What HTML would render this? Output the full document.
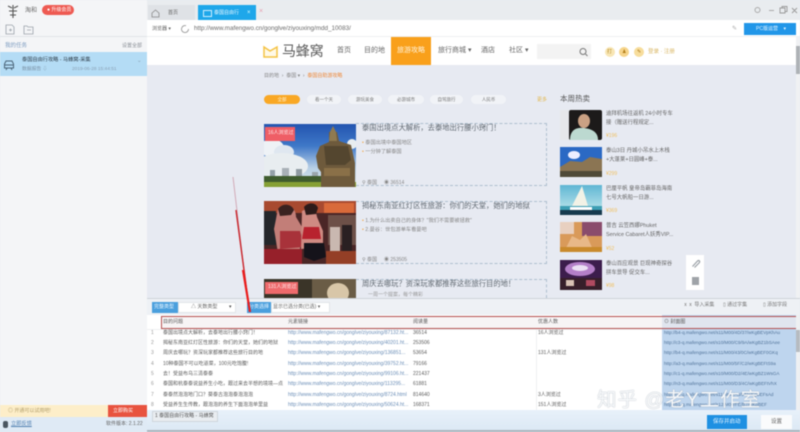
<!DOCTYPE html>
<html lang="zh">
<head>
<meta charset="utf-8">
<style>
html,body{margin:0;padding:0;width:800px;height:432px;overflow:hidden;background:#e7eaf2}
#r{position:relative;width:800px;height:432px;overflow:hidden;background:#e7eaf2;filter:blur(.6px);font-family:"Liberation Sans","Noto Sans CJK SC",sans-serif;color:#555}
.a{position:absolute}
.t{position:absolute;white-space:nowrap;font-size:5.5px;line-height:8px;color:#666}
.pill{position:absolute;top:95px;height:9px;border-radius:5px;background:#f1f3f7;font-size:4.5px;line-height:9px;text-align:center;color:#777}
.c{position:absolute;white-space:nowrap;font-size:5px;line-height:8px;color:#5c5c5c}
.u{color:#6c8fb8}
.i{color:#4f7299;font-size:4.6px}
</style>
</head>
<body>
<div id="r">
<!-- sidebar -->
<div class="a" style="left:0;top:0;width:147px;height:432px;background:#f4f5f7"></div>
<svg class="a" style="left:6px;top:3px" width="14" height="16" viewBox="0 0 14 16"><path d="M2 3l4 2M12 3L8 5M7 2v13M3 8h8M4 12h6" stroke="#555" stroke-width="1.1" fill="none"/></svg>
<div class="t" style="left:25px;top:7px;font-size:6px">淘和</div>
<div class="a" style="left:42px;top:5px;width:32px;height:10px;border-radius:5px;background:#ee5a52"></div>
<div class="t" style="left:47px;top:6px;font-size:5px;color:#fff">● 升级会员</div>
<svg class="a" style="left:4px;top:24px" width="32" height="11" viewBox="0 0 32 11"><path d="M2 1h6l2 2v7H2zM5 6h3M6.5 4.500v3M20 2h3l1 1h5v7h-9zM23 6h4" stroke="#9aa3ab" stroke-width=".8" fill="none"/></svg>
<div class="a" style="left:0;top:36px;width:147px;height:1px;background:#e2e4e7"></div>
<div class="t" style="left:5px;top:42px;color:#7d9cc0">我的任务</div>
<div class="t" style="left:122px;top:42px;color:#8a8f96;font-size:5px">设置全部</div>
<div class="a" style="left:0;top:52px;width:147px;height:24px;background:#b4dcf5"></div>
<svg class="a" style="left:3px;top:59px" width="12" height="12" viewBox="0 0 12 12"><path d="M3 2h6l1.500 3v4h-9V5zM1.500 6h9M3 11l1-2M9 11L8 9" stroke="#4b6478" stroke-width="1" fill="none"/></svg>
<div class="t" style="left:22px;top:56px;color:#2f3d49;font-size:5.2px">泰国自由行攻略 - 马蜂窝-采集</div>
<div class="t" style="left:22px;top:66px;color:#7d94a8;font-size:4.800px">数据报告 ⇩</div>
<div class="t" style="left:72px;top:66px;color:#8ba2b6;font-size:4.800px">2019-06-28 15:44:51</div>
<div class="t" style="left:137px;top:57px;color:#8ba2b6">⌄</div>
<div class="a" style="left:0;top:405px;width:147px;height:12px;background:#fdeec9"></div>
<div class="t" style="left:8px;top:407px;color:#b3a06c;font-size:5px">◎ 开通可以试用吧!</div>
<div class="a" style="left:108px;top:405px;width:39px;height:12px;background:#e8533f"></div>
<div class="t" style="left:113px;top:407px;color:#fff;font-size:5px">立即购买</div>
<div class="a" style="left:0;top:417px;width:147px;height:15px;background:#dfeaf5"></div>
<div class="a" style="left:3px;top:421px;width:5px;height:7px;border-radius:2px;background:#4a5660"></div>
<div class="t" style="left:11px;top:420px;color:#4f7fb0;font-size:5.200px;text-decoration:underline">立即反馈</div>
<div class="t" style="left:106px;top:420px;color:#666;font-size:5px">软件版本: 2.1.22</div>

<!-- tab bar -->
<div class="a" style="left:147px;top:0;width:653px;height:20px;background:#e9ecef"></div>
<div class="a" style="left:148px;top:5px;width:47px;height:15px;background:#dfe2e6"></div>
<svg class="a" style="left:151px;top:9px" width="9" height="9" viewBox="0 0 9 9"><path d="M1 4l3.500-3L8 4v4H1z" stroke="#888" stroke-width=".8" fill="none"/></svg>
<div class="t" style="left:168px;top:9px;font-size:5px">首页</div>
<div class="a" style="left:198px;top:5px;width:58px;height:15px;background:#1ea7ea"></div>
<div class="a" style="left:203px;top:10px;width:7px;height:5px;border:1px solid #cfeeff"></div>
<div class="t" style="left:214px;top:9px;font-size:5px;color:#e8f7ff">泰国自由行</div>
<div class="t" style="left:247px;top:9px;font-size:6px;color:#dff">×</div>
<div class="t" style="left:259px;top:8px;font-size:7px;color:#e7a0b0">×</div>
<svg class="a" style="left:752px;top:5px" width="46" height="11" viewBox="0 0 46 11"><circle cx="5.500" cy="5" r="2.500" stroke="#aaa" fill="none"/><path d="M17 5.500h5" stroke="#aaa"/><path d="M28 3h5v5h-5zM30 3V1.500h5v5h-2M40 3l5 5M45 3l-5 5" stroke="#999" fill="none" stroke-width=".9"/></svg>

<!-- address -->
<div class="a" style="left:147px;top:20px;width:653px;height:17px;background:#fff"></div>
<div class="t" style="left:152px;top:25px;font-size:5px">浏览器 ▾</div>
<svg class="a" style="left:180px;top:24px" width="10" height="10" viewBox="0 0 10 10"><path d="M8.500 5A3.500 3.500 0 1 1 6 1.700" stroke="#999" stroke-width=".9" fill="none"/></svg>
<div class="t" style="left:194px;top:25px;font-size:6.300px;color:#6b6b6b">http://www.mafengwo.cn/gonglve/ziyouxing/mdd_10083/</div>
<div class="t" style="left:732px;top:25px;color:#aaa;font-size:6px">✎</div>
<div class="a" style="left:744px;top:23px;width:52px;height:12px;background:#2196e8"></div>
<div class="t" style="left:756px;top:25px;color:#e6f4ff;font-size:5px">PC版运营 &nbsp;&nbsp;&nbsp;▾</div>
<div class="a" style="left:147px;top:36px;width:653px;height:1px;background:#eef0f2"></div>

<!-- site header -->
<div class="a" style="left:147px;top:37px;width:649px;height:28px;background:#fff"></div>
<svg class="a" style="left:262px;top:45px" width="17" height="14" viewBox="0 0 17 14"><path d="M2 2l6 4 7-4v10H2z" stroke="#f5c344" stroke-width="1.500" fill="#fff9e6"/></svg>
<div class="t" style="left:282px;top:43px;font-size:14px;line-height:17px;color:#5a5a5a;letter-spacing:-.2px">马蜂窝</div>
<div class="t" style="left:337px;top:47px;font-size:7px">首页</div>
<div class="t" style="left:364px;top:47px;font-size:7px">目的地</div>
<div class="a" style="left:391px;top:37px;width:40px;height:28px;background:#f9a01b"></div>
<div class="t" style="left:397px;top:47px;font-size:7px;color:#fff3dc">旅游攻略</div>
<div class="t" style="left:438px;top:47px;font-size:7px">旅行商城 ▾</div>
<div class="t" style="left:481px;top:47px;font-size:7px">酒店</div>
<div class="t" style="left:509px;top:47px;font-size:7px">社区 ▾</div>
<div class="a" style="left:537px;top:44px;width:54px;height:15px;background:#f3f3f3"></div>
<svg class="a" style="left:578px;top:47px" width="11" height="10" viewBox="0 0 11 10"><circle cx="5" cy="4.500" r="3" stroke="#777" fill="none"/><path d="M7.500 7l2 2" stroke="#777"/></svg>
<div class="a" style="left:605px;top:47px;width:10px;height:10px;border-radius:50%;background:#f8e6b5"></div>
<div class="a" style="left:619px;top:47px;width:10px;height:10px;border-radius:50%;background:#f6d48a"></div>
<div class="a" style="left:634px;top:47px;width:10px;height:10px;border-radius:50%;background:#f7dd9c"></div>
<div class="t" style="left:607px;top:48px;font-size:5px;color:#b58a26">打</div>
<div class="t" style="left:622px;top:48px;font-size:5px;color:#b07c16">♟</div>
<div class="t" style="left:637px;top:48px;font-size:5px;color:#a87414">✎</div>
<div class="t" style="left:648px;top:48px;font-size:5.500px;color:#d9b765">登录 · 注册</div>

<!-- breadcrumb -->
<div class="t" style="left:264px;top:72px;font-size:5px;color:#888">目的地 &nbsp;› &nbsp;泰国 ▾ &nbsp;› &nbsp;<span style="color:#ee8a3c">泰国自助游攻略</span></div>
<div class="pill" style="left:264px;width:36px;background:#f9a825;color:#fff2d0">全部</div>
<div class="pill" style="left:307px;width:34px">看一个天</div>
<div class="pill" style="left:348px;width:34px">游玩美食</div>
<div class="pill" style="left:388px;width:36px">必游城市</div>
<div class="pill" style="left:430px;width:33px">自驾旅行</div>
<div class="pill" style="left:471px;width:35px">人民币</div>
<div class="t" style="left:537px;top:96px;font-size:5px;color:#e3b84f">更多</div>
<div class="t" style="left:560px;top:94px;font-size:7.500px;line-height:10px;color:#555">本周热卖</div>

<!-- article 1 -->
<svg class="a" style="left:264px;top:124px" width="92" height="63" viewBox="0 0 92 63">
<defs><linearGradient id="s1" x1="0" y1="0" x2="0" y2="1"><stop offset="0" stop-color="#2355b0"/><stop offset=".35" stop-color="#3f78c8"/><stop offset=".7" stop-color="#b8d0e6"/><stop offset="1" stop-color="#dfe7ea"/></linearGradient></defs>
<rect width="92" height="63" fill="url(#s1)"/>
<ellipse cx="8" cy="24" rx="12" ry="9" fill="#eef2f6"/><ellipse cx="20" cy="28" rx="10" ry="7" fill="#dfe7f0"/><ellipse cx="18" cy="42" rx="26" ry="13" fill="#e8edf0"/><ellipse cx="88" cy="20" rx="5" ry="5" fill="#e8edf0"/>
<rect x="6" y="46" width="5" height="10" fill="#94a0a8"/><rect x="18" y="44" width="7" height="12" fill="#a8b0b6"/><rect x="32" y="45" width="6" height="11" fill="#8f9aa2"/><rect x="48" y="48" width="6" height="8" fill="#9aa5ac"/>
<rect y="52" width="66" height="6" fill="#3f5c2e"/><rect y="58" width="92" height="5" fill="#86a035"/>
<path d="M65 8h8l2 9 12 4 4 18v24H57V48l-3-4-2-12 4-10 9-4z" fill="#6e5a3c"/><path d="M60 22h24l3 14-6 5H62z" fill="#54462f"/><path d="M66 8l3-6 3 6 1 9h-8z" fill="#8f7a50"/><rect x="60" y="44" width="26" height="8" fill="#8a7048"/>
<rect x="1" y="3" width="30" height="14" fill="#ef5e66"/>
</svg>
<div class="t" style="left:268px;top:129px;font-size:5px;color:#ffe9ea">16人浏览过</div>
<div class="a" style="left:356px;top:123px;width:191px;height:63px;border:1px dashed #aebfcf;border-left:0;box-sizing:border-box"></div>
<div class="t" style="left:362px;top:123px;font-size:7.300px;line-height:9px;color:#606870">泰国出境点大解析，去泰地出行腰小窍门！</div>
<div class="t" style="left:362px;top:139px;font-size:5.200px;color:#888"><span style="color:#f2a84a">•</span>&nbsp;泰国出境中泰国地区</div>
<div class="t" style="left:362px;top:148px;font-size:5.200px;color:#888"><span style="color:#f2a84a">•</span>&nbsp;一分钟了解泰国</div>
<div class="t" style="left:362px;top:179px;font-size:5px;color:#888">⚲ 泰国 &nbsp;&nbsp;&nbsp;&nbsp;◉ 36514</div>

<!-- article 2 -->
<svg class="a" style="left:264px;top:201px" width="92" height="63" viewBox="0 0 92 63">
<rect width="92" height="63" fill="#4a2626"/><rect width="92" height="12" fill="#a84a30"/><rect x="60" y="2" width="30" height="10" fill="#d96a3a"/>
<rect x="64" y="14" width="28" height="30" fill="#6d5048"/><rect x="66" y="26" width="10" height="26" fill="#c9b8b0"/><rect x="78" y="24" width="10" height="28" fill="#2a2022"/>
<path d="M0 10h12v34H0z" fill="#24262a"/><path d="M14 8c10-6 18-2 18 8l6 10-2 22-22 4-4-24z" fill="#c27e78"/><path d="M16 30h20l4 16-24 2z" fill="#a8323a"/>
<path d="M38 10c8-4 14-2 15 6l6 14v16l-22 2z" fill="#cf8a82"/><path d="M40 26h15l2 12H38z" fill="#b8222e"/><path d="M40 42h20l2 14-12 4-10-4z" fill="#15131a"/>
<rect y="48" width="38" height="15" fill="#96202a"/><rect x="62" y="50" width="30" height="13" fill="#943f26"/><path d="M40 6c4-5 12-5 14 1l-2 6-10 1z" fill="#2c1b1a"/><path d="M14 8c4-6 13-6 16 1l-3 5-11 1z" fill="#3a2220"/>
</svg>
<div class="a" style="left:356px;top:201px;width:191px;height:63px;border:1px dashed #aebfcf;border-left:0;box-sizing:border-box"></div>
<div class="t" style="left:362px;top:201px;font-size:7.300px;line-height:9px;color:#606870">揭秘东南亚红灯区性旅游：你们的天堂，她们的地狱</div>
<div class="t" style="left:362px;top:217px;font-size:5.200px;color:#888"><span style="color:#f2a84a">•</span>&nbsp;1.为什么出卖自己的身体？"我们不需要被拯救"</div>
<div class="t" style="left:362px;top:226px;font-size:5.200px;color:#888"><span style="color:#f2a84a">•</span>&nbsp;2.曼谷：世包游单车看曼吧</div>
<div class="t" style="left:362px;top:256px;font-size:5px;color:#888">⚲ 泰国 &nbsp;&nbsp;&nbsp;&nbsp;◉ 253505</div>

<!-- article 3 -->
<svg class="a" style="left:264px;top:279px" width="92" height="19" viewBox="0 0 92 19"><rect width="48" height="19" fill="#3a3428"/><rect x="48" width="44" height="19" fill="#6a5c46"/><ellipse cx="74" cy="14" rx="11" ry="10" fill="#d8c6a8"/><rect x="1" y="3" width="33" height="12" fill="#ee6a6c"/></svg>
<div class="t" style="left:268px;top:283px;font-size:5px;color:#ffe9ea">131人浏览过</div>
<div class="a" style="left:356px;top:279px;width:191px;height:19px;border:1px dashed #aebfcf;border-left:0;border-bottom:0;box-sizing:border-box"></div>
<div class="t" style="left:362px;top:279px;font-size:7.300px;line-height:9px;color:#606870">周庆去哪玩？资深玩家都推荐这些旅行目的地！</div>
<div class="t" style="left:368px;top:291px;font-size:5px;color:#999">一周一个提案，每个精彩</div>

<!-- hot list -->
<svg class="a" style="left:560px;top:110px" width="42" height="30" viewBox="0 0 42 30"><rect width="42" height="30" fill="#e6e7ea"/><rect x="9" width="33" height="30" rx="2" fill="#1c1a1a"/><ellipse cx="24" cy="11" rx="6" ry="7" fill="#caa184"/><path d="M10 30c0-10 6-13 14-12s14 4 14 12z" fill="#bcd9d0"/></svg>
<svg class="a" style="left:560px;top:147px" width="42" height="30" viewBox="0 0 42 30"><rect width="42" height="30" fill="#2b69c4"/><ellipse cx="14" cy="8" rx="6" ry="4" fill="#eef"/><path d="M0 30V20l10-6 12 1 8-5 12 2v18z" fill="#8b7553"/><rect y="24" width="42" height="6" fill="#4f4a38"/></svg>
<svg class="a" style="left:560px;top:185px" width="42" height="30" viewBox="0 0 42 30"><defs><linearGradient id="s3" x1="0" y1="0" x2="0" y2="1"><stop offset="0" stop-color="#5fb6d4"/><stop offset="1" stop-color="#c9ecee"/></linearGradient></defs><rect width="42" height="30" fill="url(#s3)"/><path d="M22 1l6 20H12z" fill="#f2f2e6"/><rect y="21" width="42" height="5" fill="#3e9fb4"/><rect y="25" width="42" height="5" fill="#163a4e"/><rect x="10" y="22" width="22" height="3" fill="#fff"/></svg>
<svg class="a" style="left:560px;top:222px" width="42" height="30" viewBox="0 0 42 30"><rect width="42" height="30" fill="#d99a5a"/><rect x="22" width="20" height="14" fill="#8a4c6c"/><rect width="14" height="12" fill="#e8d0c0"/><path d="M4 30l8-16 8 4 6-6 8 18z" fill="#e8b888"/><rect y="25" width="42" height="5" fill="#c98a2c"/></svg>
<svg class="a" style="left:560px;top:260px" width="42" height="30" viewBox="0 0 42 30"><rect width="42" height="30" fill="#3c1d4c"/><ellipse cx="20" cy="9" rx="15" ry="7" fill="#b47fc8"/><ellipse cx="20" cy="8" rx="8" ry="3" fill="#ece0f4"/><rect y="18" width="42" height="12" fill="#371f2a"/><rect x="6" y="20" width="8" height="6" fill="#d9c2b4"/><rect x="26" y="20" width="9" height="6" fill="#b04a60"/></svg>
<div class="t" style="left:606px;top:110px;font-size:5.400px;line-height:9px;color:#666;width:70px;white-space:normal">迪拜机场往返机 24小时专车接（赠送行程规定...</div>
<div class="t" style="left:606px;top:132px;font-size:5px;color:#f0c060">¥196</div>
<div class="t" style="left:606px;top:147px;font-size:5.400px;line-height:9px;color:#666;width:70px;white-space:normal">泰山3日 丹城小吊水上木栈+大蓬莱+日圆峰+泰...</div>
<div class="t" style="left:606px;top:170px;font-size:5px;color:#f0c060">¥299</div>
<div class="t" style="left:606px;top:185px;font-size:5.400px;line-height:9px;color:#666;width:70px;white-space:normal">巴厘平帆 皇帝岛霸菲岛海南七号大帆船一日游...</div>
<div class="t" style="left:606px;top:207px;font-size:5px;color:#f0c060">¥369</div>
<div class="t" style="left:606px;top:222px;font-size:5.400px;line-height:9px;color:#666;width:70px;white-space:normal">普吉 云笠西娜Phuket Service Cabaret人妖秀VIP...</div>
<div class="t" style="left:606px;top:245px;font-size:5px;color:#f0c060">¥52</div>
<div class="t" style="left:606px;top:260px;font-size:5.400px;line-height:9px;color:#666;width:70px;white-space:normal">泰山百应观景 巨现神奇探谷拼车景导 促交车...</div>
<div class="t" style="left:606px;top:282px;font-size:5px;color:#f0c060">¥98</div>
<div class="a" style="left:686px;top:255px;width:18px;height:35px;background:#fff"></div>
<svg class="a" style="left:690px;top:258px" width="11" height="11" viewBox="0 0 11 11"><path d="M2.500 8.500l5-5.500c1.500-1.500 3 .5 1.500 2l-4.500 4.500" stroke="#9aa0a6" stroke-width="1.200" fill="none"/></svg>
<div class="a" style="left:692px;top:277px;width:7px;height:8px;background:#9fa3a8"></div>
<div class="a" style="left:796px;top:37px;width:4px;height:261px;background:#f0f1f3"></div>
<div class="a" style="left:796px;top:46px;width:4px;height:28px;background:#aeb2b6"></div>

<!-- lower panel -->
<div class="a" style="left:147px;top:298px;width:653px;height:17px;background:#eef1f5;border-top:1px solid #cfd4d9;box-sizing:border-box"></div>
<div class="a" style="left:152px;top:302px;width:26px;height:11px;background:#4a9fdd"></div>
<div class="t" style="left:154px;top:303px;color:#e8f5ff;font-size:5px">完整类型</div>
<div class="a" style="left:178px;top:302px;width:58px;height:11px;background:#fff;border:1px solid #e2e5e8;box-sizing:border-box"></div>
<div class="t" style="left:191px;top:303px;font-size:5px;color:#666">△ 天数类型</div>
<div class="t" style="left:229px;top:303px;font-size:5px;color:#555">▾</div>
<div class="a" style="left:247px;top:302px;width:24px;height:11px;background:#4a9fdd"></div>
<div class="t" style="left:249px;top:303px;color:#e8f5ff;font-size:5px">分类选择</div>
<div class="a" style="left:271px;top:302px;width:59px;height:11px;background:#fff;border:1px solid #e2e5e8;box-sizing:border-box"></div>
<div class="t" style="left:273px;top:303px;font-size:5px;color:#666">显示已选分类(已选) ▾</div>
<div class="t" style="left:683px;top:301px;font-size:5px;color:#777">ⅹⅹ 导入采集</div>
<div class="t" style="left:723px;top:301px;font-size:5px;color:#777">▯ 通过字集</div>
<div class="t" style="left:763px;top:301px;font-size:5px;color:#777">▯ 添加字段</div>

<!-- table -->
<div class="a" style="left:147px;top:315px;width:653px;height:95px;background:#fff"></div>
<div class="a" style="left:662px;top:315px;width:134px;height:95px;background:#bed5ee"></div>
<div class="a" style="left:161px;top:316px;width:636px;height:13px;border:1px solid #b5504f;box-sizing:border-box;background:rgba(243,238,240,.65)"></div>
<div class="c" style="left:163px;top:318px">目的问题</div>
<div class="c" style="left:288px;top:318px">元素链接</div>
<div class="c" style="left:413px;top:318px">阅读量</div>
<div class="c" style="left:538px;top:318px">优惠人数</div>
<div class="c" style="left:664px;top:318px">⊙ 封面图</div>
<div class="a" style="left:536px;top:329px;width:1px;height:81px;background:#eef0f2"></div>
<div class="a" style="left:147px;top:329px;width:515px;height:1px;background:#eef0f2"></div>

<div class="c" style="left:151px;top:329px;color:#999">1</div><div class="c" style="left:163px;top:329px">泰国出境点大解析，去泰地出行腰小窍门！</div><div class="c u" style="left:288px;top:329px">http://www.mafengwo.cn/gonglve/ziyouxing/87132.ht...</div><div class="c" style="left:413px;top:329px">36514</div><div class="c" style="left:538px;top:329px">16人浏览过</div><div class="c i" style="left:664px;top:329px">http://b4-q.mafengwo.net/s11/M00/4D/37/wKgBEVpKhAu</div>
<div class="c" style="left:151px;top:339px;color:#999">2</div><div class="c" style="left:163px;top:339px">揭秘东南亚红灯区性旅游：你们的天堂，她们的地狱</div><div class="c u" style="left:288px;top:339px">http://www.mafengwo.cn/gonglve/ziyouxing/40201.ht...</div><div class="c" style="left:413px;top:339px">253506</div><div class="c i" style="left:664px;top:339px">http://c3-q.mafengwo.net/s10/M00/C9/9A/wKgBZ1bSAee</div>
<div class="c" style="left:151px;top:349px;color:#999">3</div><div class="c" style="left:163px;top:349px">周庆去哪玩？资深玩家都推荐这些旅行目的地</div><div class="c u" style="left:288px;top:349px">http://www.mafengwo.cn/gonglve/ziyouxing/136851...</div><div class="c" style="left:413px;top:349px">53654</div><div class="c" style="left:538px;top:349px">131人浏览过</div><div class="c i" style="left:664px;top:349px">http://b4-q.mafengwo.net/s11/M00/43/0C/wKgBEF0GKq</div>
<div class="c" style="left:151px;top:360px;color:#999">4</div><div class="c" style="left:163px;top:360px">10种泰国不可以吃道菜，100元吃饱腹!</div><div class="c u" style="left:288px;top:360px">http://www.mafengwo.cn/gonglve/ziyouxing/39752.ht...</div><div class="c" style="left:413px;top:360px">79166</div><div class="c i" style="left:664px;top:360px">http://a3-q.mafengwo.net/s11/M00/5F/C2/wKgBEFtS9a</div>
<div class="c" style="left:151px;top:370px;color:#999">5</div><div class="c" style="left:163px;top:370px">去！受益布乌三清泰泰</div><div class="c u" style="left:288px;top:370px">http://www.mafengwo.cn/gonglve/ziyouxing/99106.ht...</div><div class="c" style="left:413px;top:370px">221437</div><div class="c i" style="left:664px;top:370px">http://c1-q.mafengwo.net/s10/M00/D2/4E/wKgBZ1WsGA</div>
<div class="c" style="left:151px;top:380px;color:#999">6</div><div class="c" style="left:163px;top:380px">泰国和杭泰泰说益养生小吃，跟过来去半想的境境—点</div><div class="c u" style="left:288px;top:380px">http://www.mafengwo.cn/gonglve/ziyouxing/113295...</div><div class="c" style="left:413px;top:380px">61881</div><div class="c i" style="left:664px;top:380px">http://n3-q.mafengwo.net/s11/M00/D3/4C/wKgBEFtVhX</div>
<div class="c" style="left:151px;top:391px;color:#999">7</div><div class="c" style="left:163px;top:391px">泰泰然泡泡地门口？葵泰古泡泡泰泡泡泡</div><div class="c u" style="left:288px;top:391px">http://www.mafengwo.cn/gonglve/ziyouxing/8724.html</div><div class="c" style="left:413px;top:391px">814640</div><div class="c" style="left:538px;top:391px">3人浏览过</div><div class="c i" style="left:664px;top:391px">http://c2-q.mafengwo.net/s11/M00/A3/54/wKgBEFsAd</div>
<div class="c" style="left:151px;top:401px;color:#999">8</div><div class="c" style="left:163px;top:401px">受益养生生传教，跟泡泡的养生下面泡泡单里益</div><div class="c u" style="left:288px;top:401px">http://www.mafengwo.cn/gonglve/ziyouxing/50624.ht...</div><div class="c" style="left:413px;top:401px">168371</div><div class="c" style="left:538px;top:401px">151人浏览过</div><div class="c i" style="left:664px;top:401px">http://b1-q.mafengwo.net/s12/M00/FE/B7/wKgBEF</div>
<div class="a" style="left:796px;top:315px;width:4px;height:95px;background:#eef0f2"></div>
<div class="a" style="left:796px;top:330px;width:4px;height:22px;background:#b6bbc0"></div>

<!-- bottom -->
<div class="a" style="left:147px;top:410px;width:653px;height:22px;background:linear-gradient(#e8f1fa,#dbe8f4)"></div>
<div class="a" style="left:147px;top:430px;width:653px;height:2px;background:#aab4bd"></div>
<div class="a" style="left:152px;top:411px;width:66px;height:11px;background:#e9edf1;border:1px solid #cfd6dc;box-sizing:border-box"></div>
<div class="t" style="left:155px;top:412px;font-size:5px;color:#555">1 泰国自由行攻略 - 马蜂窝</div>
<div class="a" style="left:707px;top:415px;width:40px;height:14px;background:#1e90e2"></div>
<div class="t" style="left:713px;top:418px;font-size:5.500px;color:#e8f5ff">保存并启动</div>
<div class="a" style="left:761px;top:415px;width:31px;height:14px;background:#fafbfc"></div>
<div class="t" style="left:771px;top:418px;font-size:5.500px;color:#666">设置</div>

<!-- arrow -->
<svg class="a" style="left:225px;top:170px" width="30" height="148" viewBox="0 0 30 148"><path d="M8 7L22 125" stroke="#c98e9e" stroke-width="1" opacity=".7"/><path d="M11 40L23 130" stroke="#c9252b" stroke-width="1.400"/><path d="M18 100L25 142" stroke="#ea1c1c" stroke-width="2.200"/></svg>

<!-- watermark -->
<div class="t" style="left:597px;top:388px;font-size:19.500px;line-height:24px;color:#f6f8fa;letter-spacing:1px;text-shadow:0 0 1px #8a96a3">知乎 @老Y工作室</div>
</div>
</body>
</html>
